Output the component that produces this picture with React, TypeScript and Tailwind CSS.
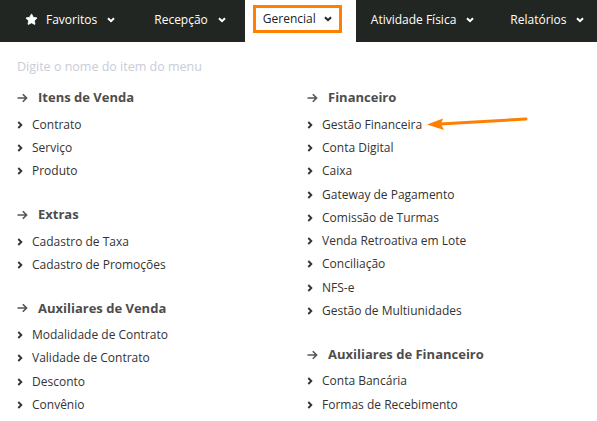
import { Star } from "lucide-react";

const leftSections = [
  { title: "Itens de Venda", items: ["Contrato", "Serviço", "Produto"] },
  { title: "Extras", items: ["Cadastro de Taxa", "Cadastro de Promoções"] },
  {
    title: "Auxiliares de Venda",
    items: ["Modalidade de Contrato", "Validade de Contrato", "Desconto", "Convênio"],
  },
];

const rightSections = [
  {
    title: "Financeiro",
    items: [
      "Gestão Financeira",
      "Conta Digital",
      "Caixa",
      "Gateway de Pagamento",
      "Comissão de Turmas",
      "Venda Retroativa em Lote",
      "Conciliação",
      "NFS-e",
      "Gestão de Multiunidades",
    ],
  },
  { title: "Auxiliares de Financeiro", items: ["Conta Bancária", "Formas de Recebimento"] },
];

function CaretDown({ className = "" }: { className?: string }) {
  return (
    <svg className={className} width="8" height="6" viewBox="0 0 8 6" aria-hidden="true">
      <path d="M1 1.2 4 4.2 7 1.2" fill="none" stroke="currentColor" strokeWidth="2" />
    </svg>
  );
}

function CaretRight() {
  return (
    <svg width="6" height="8" viewBox="0 0 6 8" aria-hidden="true" className="shrink-0">
      <path d="M1.3 1 4.3 4 1.3 7" fill="none" stroke="#333" strokeWidth="1.9" />
    </svg>
  );
}

function ArrowRight() {
  return (
    <svg width="11" height="10" viewBox="0 0 11 10" aria-hidden="true" className="shrink-0">
      <path d="M0.5 5H9.5M5.8 1.2 9.6 5 5.8 8.8" fill="none" stroke="#555" strokeWidth="1.6" />
    </svg>
  );
}

function Section({ title, items }: { title: string; items: string[] }) {
  return (
    <div className="mb-[20px]">
      <div className="flex h-[24px] items-center gap-[10px]">
        <ArrowRight />
        <span className="text-[13px] font-bold text-[#4d4d4d]">{title}</span>
      </div>
      <ul className="mt-[3px]">
        {items.map((item) => (
          <li key={item} className="flex h-[23.3px] items-center gap-[9px] text-[12px] text-[#333]">
            <CaretRight />
            <span>{item}</span>
          </li>
        ))}
      </ul>
    </div>
  );
}

export default function App() {
  return (
    <div
      className="relative h-[421px] w-[597px] overflow-hidden bg-white"
      style={{ fontFamily: '"Open Sans", "Noto Sans", sans-serif' }}
    >
      <nav className="flex h-[42px] items-center bg-[#222622] text-[12px] text-white">
        <div className="flex h-full items-center pb-[3px] pl-[25px] pr-[20px]">
          <Star className="h-[13px] w-[13px] fill-white" strokeWidth={1.5} />
          <span className="ml-[8px]">Favoritos</span>
          <CaretDown className="ml-[10px]" />
        </div>
        <div className="flex h-full items-center pb-[3px] px-[19px]">
          <span>Recepção</span>
          <CaretDown className="ml-[10px]" />
        </div>
        <div className="flex h-full items-center bg-white pl-[8px] pr-[14px]">
          <div className="mb-[4px] flex h-[28px] items-center border-[3px] border-[#ff7f00] pl-[7px] pr-[7px] text-[#222]">
            <span>Gerencial</span>
            <CaretDown className="ml-[8px]" />
          </div>
        </div>
        <div className="flex h-full items-center pb-[3px] pl-[15px] pr-[18px]">
          <span>Atividade Física</span>
          <CaretDown className="ml-[10px]" />
        </div>
        <div className="flex h-full items-center pb-[3px] pl-[18px]">
          <span>Relatórios</span>
          <CaretDown className="ml-[9px]" />
        </div>
      </nav>

      <main className="px-[17px]">
        <div className="flex h-[44px] items-center pt-[6px] text-[12.5px] text-[#c8cdd8]">
          Digite o nome do item do menu
        </div>
        <div className="grid grid-cols-[290px_1fr]">
          <div>
            {leftSections.map((s) => (
              <Section key={s.title} {...s} />
            ))}
          </div>
          <div>
            {rightSections.map((s) => (
              <Section key={s.title} {...s} />
            ))}
          </div>
        </div>
      </main>

      <svg className="absolute left-[420px] top-[112px]" width="112" height="22" viewBox="0 0 112 22" aria-hidden="true">
        <path d="M106 7 L20 12" stroke="#ff7f00" strokeWidth="3" strokeLinecap="round" fill="none" />
        <path d="M7 12.5 L23 6.5 L21 12 L24 18 Z" fill="#ff7f00" />
      </svg>
    </div>
  );
}
